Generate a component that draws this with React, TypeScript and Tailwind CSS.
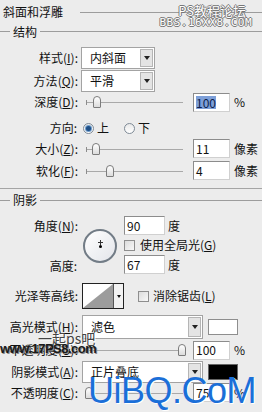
import type { ReactNode } from "react";

// Photoshop "斜面和浮雕" (Bevel & Emboss) layer style panel

function Key({ k }: { k: string }) {
  return (
    <>
      (<span className="underline underline-offset-1">{k}</span>):
    </>
  );
}

function Label({ children }: { children: ReactNode }) {
  return <div className="w-[78px] shrink-0 text-right whitespace-nowrap">{children}</div>;
}

function Arrow() {
  return (
    <div className="flex h-full w-[13px] items-center justify-center border border-[#b5b5b5] bg-[#e4e4e4]">
      <div className="h-0 w-0 border-x-[3px] border-t-[4px] border-x-transparent border-t-[#222]" />
    </div>
  );
}

function Select({ value, width }: { value: string; width: string }) {
  return (
    <div className={`${width} flex h-full items-center border border-[#a3a3a3] bg-white p-[1px]`}>
      <div className="flex-1 pl-[7px]">{value}</div>
      <Arrow />
    </div>
  );
}

function Input({ value, selected }: { value: string; selected?: boolean }) {
  return (
    <div className="flex h-[19px] w-[37px] shrink-0 items-center border border-[#8c8c8c] border-b-[#d0d0d0] border-r-[#d0d0d0] bg-white pl-[2px]">
      {selected ? <span className="bg-[#7d9fd8] leading-[13px] text-[#0c1f4d]">{value}</span> : value}
    </div>
  );
}

function Slider({ pos }: { pos: number }) {
  return (
    <div className="relative ml-[8px] h-[14px] w-[97px] shrink-0">
      <div className="absolute left-0 right-0 top-[7px] h-px bg-[#a9a9a9]" />
      <div className="absolute left-0 top-[5px] h-[5px] w-px bg-[#8c8c8c]" />
      <div
        className="absolute top-[1px] h-[12px] w-[8px] rounded-t-[4px] rounded-b-[1px] border border-[#7c7c7c] bg-gradient-to-b from-white to-[#dcdcdc]"
        style={{ left: pos - 4 }}
      />
    </div>
  );
}

function SliderRow({ label, pos, value, unit, selected, h }: { label: ReactNode; pos: number; value: string; unit: string; selected?: boolean; h: string }) {
  return (
    <div className={`flex ${h} items-center`}>
      <Label>{label}</Label>
      <Slider pos={pos} />
      <div className="ml-[10px]">
        <Input value={value} selected={selected} />
      </div>
      <div className="ml-[4px] whitespace-nowrap">{unit}</div>
    </div>
  );
}

function Radio({ on }: { on?: boolean }) {
  return (
    <div className="flex h-[11px] w-[11px] items-center justify-center rounded-full border border-[#7e8a96] bg-gradient-to-b from-[#e8e8e8] to-white">
      {on && <div className="h-[5px] w-[5px] rounded-full bg-[#1f4f86] ring-1 ring-[#6d9ccc]" />}
    </div>
  );
}

function Check() {
  return <div className="h-[11px] w-[11px] shrink-0 border border-[#8e8e8e] bg-gradient-to-br from-[#dcdcdc] to-[#f8f8f8]" />;
}

function GroupTitle({ text, h }: { text: string; h: string }) {
  return (
    <div className={`flex ${h} items-center`}>
      <div className="h-px w-[10px] bg-[#9c9c9c]" />
      <div className="px-[3px]">{text}</div>
      <div className="h-px flex-1 bg-[#9c9c9c]" />
    </div>
  );
}

export default function App() {
  return (
    <div className="relative h-[412px] w-[262px] overflow-hidden bg-[#ececec] text-[12px] leading-none text-[#111] [font-family:'Noto_Sans_CJK_SC','Noto_Sans',sans-serif]">
      <div className="flex h-[24px] items-center">
        <div className="pl-[3px]">斜面和浮雕</div>
        <div className="ml-[17px] h-px flex-1 bg-[#9c9c9c]" />
      </div>
      <GroupTitle text="结构" h="h-[15px]" />

      <div className="mt-[8px] flex h-[22px] items-center">
        <Label>样式<Key k="I" /></Label>
        <div className="ml-[3px] h-full">
          <Select value="内斜面" width="w-[74px]" />
        </div>
      </div>
      <div className="mt-[1px] flex h-[22px] items-center">
        <Label>方法<Key k="Q" /></Label>
        <div className="ml-[3px] h-full">
          <Select value="平滑" width="w-[74px]" />
        </div>
      </div>

      <SliderRow h="h-[20px]" label={<>深度<Key k="D" /></>} pos={11} value="100" unit="%" selected />

      <div className="mt-[6px] flex h-[20px] items-center">
        <div className="w-[77px] text-right">方向:</div>
        <div className="ml-[6px]"><Radio on /></div>
        <div className="ml-[3px]">上</div>
        <div className="ml-[15px]"><Radio /></div>
        <div className="ml-[3px]">下</div>
      </div>

      <SliderRow h="h-[21px]" label={<>大小<Key k="Z" /></>} pos={10} value="11" unit="像素" />
      <div className="mt-[1px]">
        <SliderRow h="h-[21px]" label={<>软化<Key k="F" /></>} pos={24} value="4" unit="像素" />
      </div>

      <div className="mt-[7px] h-px bg-[#a5a5a5]" />
      <div className="mt-[4px]">
        <GroupTitle text="阴影" h="h-[14px]" />
      </div>

      {/* angle / altitude block */}
      <div className="mt-[9px] flex h-[59px]">
        <div className="flex w-[78px] flex-col justify-between text-right">
          <div className="flex h-[19px] items-center justify-end">角度<Key k="N" /></div>
          <div className="flex h-[19px] items-center justify-end pr-[1px]">高度:</div>
        </div>
        <div className="ml-[5px] flex items-center">
          <div className="relative h-[34px] w-[34px] rounded-full border-2 border-[#727c86] bg-gradient-to-br from-white to-[#e3e5ea]">
            <div className="absolute left-[15px] top-[9px] h-[5px] w-px bg-[#333]" />
            <div className="absolute left-[13px] top-[11px] h-px w-[5px] bg-[#333]" />
            <div className="absolute left-[14px] top-[14px] h-[3px] w-[3px] rounded-full bg-black" />
          </div>
        </div>
        <div className="ml-[7px] flex flex-col">
          <div className="flex h-[19px] items-center">
            <div className="flex h-[19px] w-[41px] items-center border border-[#8c8c8c] border-b-[#d0d0d0] border-r-[#d0d0d0] bg-white pl-[2px]">90</div>
            <div className="ml-[3px]">度</div>
          </div>
          <div className="flex h-[20px] items-center">
            <Check />
            <div className="ml-[5px] whitespace-nowrap">使用全局光(<span className="underline underline-offset-1">G</span>)</div>
          </div>
          <div className="flex h-[19px] items-center">
            <div className="flex h-[19px] w-[41px] items-center border border-[#8c8c8c] border-b-[#d0d0d0] border-r-[#d0d0d0] bg-white pl-[2px]">67</div>
            <div className="ml-[3px]">度</div>
          </div>
        </div>
      </div>

      <div className="mt-[8px] flex h-[26px] items-center">
        <Label>光泽等高线:</Label>
        <div className="ml-[4px] flex h-full w-[42px] border border-[#222] bg-white">
          <svg width="30" height="24" viewBox="0 0 30 24" className="shrink-0">
            <polygon points="0,24 30,0 30,24" fill="#9c9c9c" />
          </svg>
          <div className="flex flex-1 items-center justify-center border-l border-[#555] bg-[#f2f2f2]">
            <div className="h-0 w-0 border-x-[2.5px] border-t-[3px] border-x-transparent border-t-[#111]" />
          </div>
        </div>
        <div className="ml-[14px]"><Check /></div>
        <div className="ml-[4px] whitespace-nowrap">消除锯齿(<span className="underline underline-offset-1">L</span>)</div>
      </div>

      <div className="mt-[6px] flex h-[24px] items-center">
        <Label>高光模式<Key k="H" /></Label>
        <div className="ml-[4px] h-full">
          <Select value="滤色" width="w-[121px]" />
        </div>
        <div className="ml-[5px] h-[16px] w-[30px] border border-[#8e8e8e] bg-white" />
      </div>
      <div className="mt-[2px]">
        <SliderRow h="h-[18px]" label={<>不透明度<Key k="O" /></>} pos={96} value="100" unit="%" />
      </div>

      <div className="mt-[2px] flex h-[22px] items-center">
        <Label>阴影模式<Key k="A" /></Label>
        <div className="ml-[4px] h-full">
          <Select value="正片叠底" width="w-[121px]" />
        </div>
        <div className="ml-[5px] h-[16px] w-[30px] border border-[#666] bg-black" />
      </div>
      <SliderRow h="h-[19px]" label={<>不透明度<Key k="C" /></>} pos={3} value="75" unit="%" />

      {/* watermarks */}
      <div className="absolute right-[10px] top-[4px] flex flex-col items-end text-[13px] leading-[13px] text-white [text-shadow:1px_0_#777,-1px_0_#777,0_1px_#777,0_-1px_#777]">
        <div className="pr-[6px]">PS教程论坛</div>
        <div className="text-[11px] leading-[11px] tracking-[0.5px] [font-family:'DejaVu_Sans_Mono',monospace]">BBS.16XX8.COM</div>
      </div>
      <div className="absolute left-[38px] top-[331px] text-[14px] leading-none text-[#444] [text-shadow:1px_1px_#fff]">一起ps吧</div>
      <div className="absolute left-[0px] top-[342px] text-[13px] font-bold leading-none tracking-[-0.5px] text-[#1a1a1a] [font-family:'Liberation_Sans',sans-serif] [text-shadow:1px_1px_#888]">www.17PS8.com</div>
      <div className="absolute left-[88px] top-[373px] text-[36px] leading-none tracking-[-0.5px] text-[#1b6fd8] [font-family:'Liberation_Sans',sans-serif] [text-shadow:1px_1px_#fff]">UiBQ.CoM</div>
    </div>
  );
}
